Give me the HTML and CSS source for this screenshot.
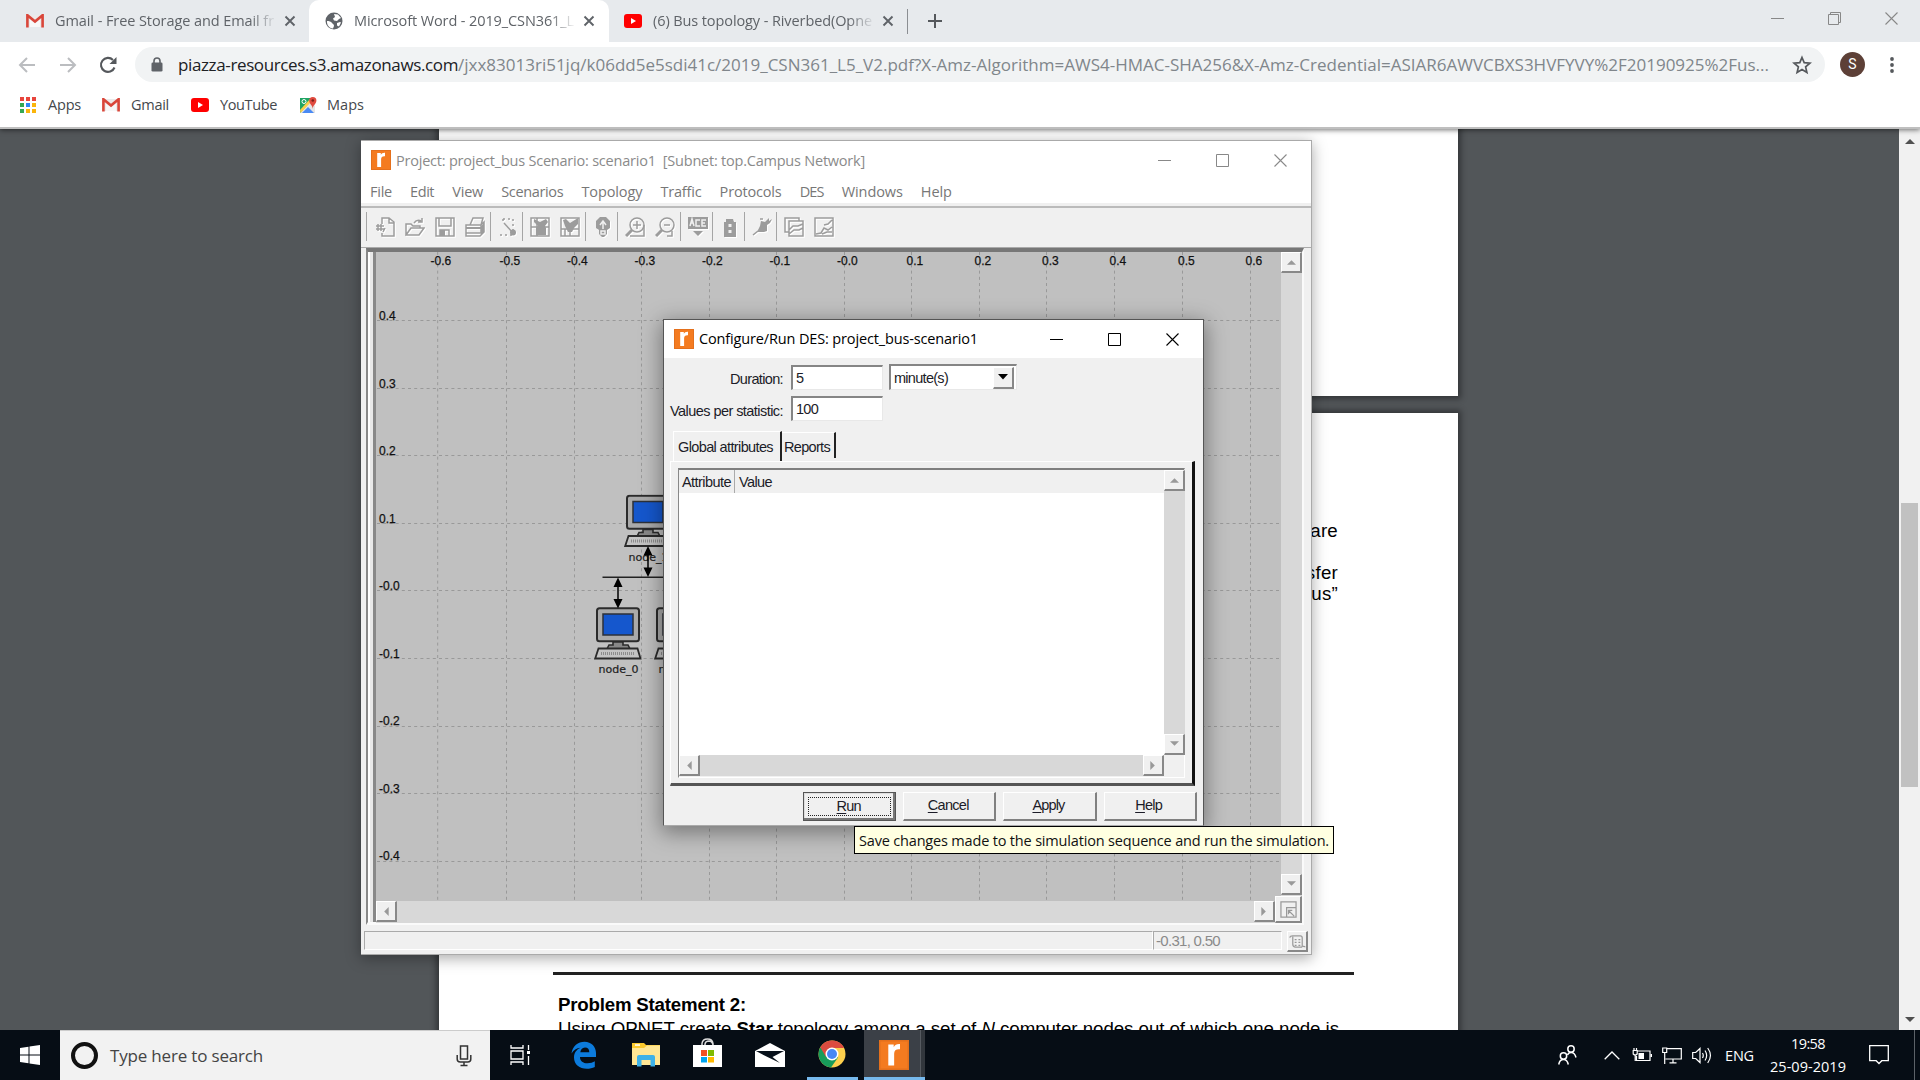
FILE: index.html
```html
<!DOCTYPE html>
<html lang="en">
<head>
<meta charset="utf-8">
<title>Microsoft Word - 2019_CSN361_L5_V2</title>
<link rel="stylesheet" href="styles.css">
</head>
<body>
<svg width="0" height="0" class="defs">
  <defs>
    <symbol id="gmail" viewBox="0 0 18 14"><path d="M1 1h16v12H1z" fill="#eceaea"/><path d="M4 13V5l5 4 5-4v8z" fill="#f8f8f8"/><path d="M1.400 13.500V1.200L9 7.600l7.600-6.400v12.300" fill="none" stroke="#d9463a" stroke-width="2.600"/></symbol>
    <symbol id="yt" viewBox="0 0 18 14"><rect width="18" height="14" rx="3" fill="#f00"/><path d="M7 4l5 3-5 3z" fill="#fff"/></symbol>
    <symbol id="x" viewBox="0 0 12 12"><path d="M1.500 1.500l9 9m0-9l-9 9" fill="none" stroke="currentColor" stroke-width="1.900"/></symbol>
    <symbol id="thinx" viewBox="0 0 13 13"><path d="M.5.5l12 12m0-12l-12 12" fill="none" stroke="currentColor" stroke-width="1.100"/></symbol>
    <symbol id="rlogo" viewBox="0 0 20 20"><path d="M0 0h20v20H0z" fill="#f47b20"/><path d="M.5.5h19v19H.5z" fill="none" stroke="#d9691a" stroke-opacity=".6"/><path d="M6.200 3h3.600v1.800C10.600 3.300 12 2.500 14 2.700v3.500c-2.600-.2-3.900.7-3.900 3V17H6.200z" fill="#fff"/></symbol>
    <symbol id="pc" viewBox="0 0 48 53">
      <rect x="3" y="1.200" width="42" height="33" rx="2.500" fill="#aaa" stroke="#2b2b2b" stroke-width="2"/>
      <rect x="9" y="7" width="30" height="21" fill="#1557cd" stroke="#2d3138" stroke-width="1.500"/>
      <path d="M19 35h10v3h5l2 4H13l2-4h4z" fill="#888" stroke="#2b2b2b" stroke-width="1.600"/>
      <path d="M4.500 41.500h39l3 10H1.200z" fill="#c4c4c4" stroke="#2b2b2b" stroke-width="1.800"/>
      <path d="M7 46.500h34" stroke="#8c8c8c" stroke-width="3" stroke-dasharray="1 1"/>
    </symbol>
    <symbol id="arrows" viewBox="0 0 10 32"><path d="M5 5v22" stroke="#000" stroke-width="1.500"/><path d="M5 .5L9.500 10H.5zM5 31.500L9.500 22H.5z"/></symbol>
  </defs>
</svg>

<div class="screen">
  <header class="browser">
    <div class="tabstrip">
      <div class="tab t1"><svg class="fav"><use href="#gmail"/></svg><span class="label fade"><span data-w="219">Gmail - Free Storage and Email fr</span></span><svg class="close"><use href="#x"/></svg></div>
      <div class="tab active"><svg class="fav globe" viewBox="0 0 18 18"><circle cx="9" cy="9" r="8.500" fill="#5f6368"/><path d="M2 9c2 0 4 .5 5 2s2 1 2 3l-1 2.500C4 16 1.700 13 2 9zM9 2l4 .6 3 3.500-2 .9-2 2-3-.5-1-2 2-1.500zM12 11l3-1 1 .5-2 4-2-1z" fill="#fff"/></svg><span class="label fade"><span data-w="220">Microsoft Word - 2019_CSN361_L</span></span><svg class="close"><use href="#x"/></svg></div>
      <div class="tab t3"><svg class="fav"><use href="#yt"/></svg><span class="label fade"><span data-w="219">(6) Bus topology - Riverbed(Opne</span></span><svg class="close"><use href="#x"/></svg></div>
      <svg class="plus" viewBox="0 0 16 16"><path d="M8 1v14M1 8h14" stroke="#55585c" stroke-width="2"/></svg>
      <div class="wincontrols">
        <svg viewBox="0 0 13 13"><path d="M0 6.500h13" stroke="#888"/></svg>
        <svg viewBox="0 0 13 13"><path d="M.5 2.500h10v10H.5zM2.500 2.500v-2h10v10h-2" fill="none" stroke="#888"/></svg>
        <svg><use href="#thinx"/></svg>
      </div>
    </div>
    <div class="toolbar">
      <svg class="nav" viewBox="0 0 18 18"><path d="M17 9H2m7-7L2 9l7 7" fill="none" stroke="#bbbdc0" stroke-width="2"/></svg>
      <svg class="nav" viewBox="0 0 18 18"><path d="M1 9h15M9 2l7 7-7 7" fill="none" stroke="#bbbdc0" stroke-width="2"/></svg>
      <svg class="nav" viewBox="0 0 18 18"><path d="M15.500 11.500A7 7 0 1 1 14 4" fill="none" stroke="#55585c" stroke-width="2.100"/><path d="M17.500 1v7h-7z" fill="#55585c"/></svg>
      <div class="omnibox">
        <svg class="lock" viewBox="0 0 12 15"><path d="M3 6V4a3 3 0 0 1 6 0v2" fill="none" stroke="#5f6368" stroke-width="1.600"/><rect x=".5" y="5.500" width="11" height="9" rx="1.300" fill="#5f6368"/></svg>
        <span class="url"><span class="host" data-w="280">piazza-resources.s3.amazonaws.com</span><span data-w="1311">/jxx83013ri51jq/k06dd5e5sdi41c/2019_CSN361_L5_V2.pdf?X-Amz-Algorithm=AWS4-HMAC-SHA256&amp;X-Amz-Credential=ASIAR6AWVCBXS3HVFYVY%2F20190925%2Fus...</span></span>
        <svg class="star" viewBox="0 0 20 20"><path d="M10 2.500l2.200 5.200 5.700.5-4.300 3.700 1.300 5.500-4.900-2.900-4.900 2.900 1.300-5.500L2.100 8.200l5.700-.5z" fill="none" stroke="#55585c" stroke-width="1.700"/></svg>
      </div>
      <span class="avatar">S</span>
      <svg class="dots" viewBox="0 0 4 18"><g fill="#55585c"><circle cx="2" cy="3" r="1.900"/><circle cx="2" cy="9" r="1.900"/><circle cx="2" cy="15" r="1.900"/></g></svg>
    </div>
    <nav class="bookmarks">
      <a class="b1"><svg viewBox="0 0 18 18"><path d="M1 1h4v4H1zM7 1h4v4H7zM13 1h4v4h-4z" fill="#e8453c"/><path d="M1 7h4v4H1z" fill="#34a853"/><path d="M7 7h4v4H7z" fill="#2f86f6"/><path d="M13 7h4v4h-4zM7 13h4v4H7zM13 13h4v4h-4z" fill="#fbb50b"/><path d="M1 13h4v4H1z" fill="#34a853"/></svg><span data-w="33">Apps</span></a>
      <a class="b2"><svg viewBox="0 0 18 14"><use href="#gmail"/></svg><span data-w="38">Gmail</span></a>
      <a class="b3"><svg viewBox="0 0 18 14"><use href="#yt"/></svg><span data-w="57">YouTube</span></a>
      <a class="b4"><svg viewBox="0 0 18 18"><path d="M1 2h14v15H1z" fill="#1fa463"/><path d="M1 17L12 5l4 5v7z" fill="#e5e5e5"/><path d="M3 17l6-6 6 6z" fill="#4a8af4"/><path d="M1 14L11 3l2 2L1.500 17z" fill="#fcd04b"/><circle cx="5" cy="5.500" r="2" fill="none" stroke="#fff"/><path d="M13.700 13c0-4-3.500-4.800-3.500-8.500a3.600 3.600 0 0 1 7.200 0c0 3.700-3.700 4.500-3.700 8.500z" fill="#e04b3f"/><circle cx="13.800" cy="4.500" r="1.300" fill="#7b1f19"/></svg><span data-w="37">Maps</span></a>
    </nav>
  </header>

  <main class="viewer">
    <div class="pages">
      <section class="page first"></section>
      <section class="page second">
        <div class="para"><p>are</p><p class="gap">sfer</p><p>bus”</p></div>
        <hr>
        <h2><span data-w="188">Problem Statement 2:</span></h2>
        <p class="body"><span data-w="781">Using OPNET create <b>Star</b> topology among a set of <i>N</i> computer nodes out of which one node is</span></p>
      </section>
    </div>
    <div class="vscroll"><svg viewBox="0 0 10 6"><path d="M0 6L5 1l5 5z"/></svg><span class="thumb"></span><svg class="end" viewBox="0 0 10 6"><path d="M0 0l5 5 5-5z"/></svg></div>
  </main>

  <footer class="taskbar">
    <div class="start"><svg viewBox="0 0 20 20"><path d="M0 3l8.500-1.200v7.700H0zM9.500 1.600L20 0v9.500H9.500zM0 10.500h8.500v7.700L0 17zM9.500 10.500H20V20L9.500 18.400z" fill="#fff"/></svg></div>
    <div class="search"><span class="ring"></span><span data-w="153">Type here to search</span>
      <svg class="mic" viewBox="0 0 16 22"><rect x="4.500" y="1" width="7" height="13" fill="none" stroke="#333" stroke-width="1.500"/><path d="M1.200 10v4q0 3 3 3h7.600q3 0 3-3v-4M8 17v3M4.500 20.500h7" fill="none" stroke="#333" stroke-width="1.500"/></svg></div>
    <div class="apps">
      <div class="app a1"><svg width="21" height="20" viewBox="0 0 21 20"><path d="M1 0v3h12V0M1 6h12v8H1zM1 20v-3h12v3M18.500 0v5M18.500 11v9" fill="none" stroke="#fff" stroke-width="1.300"/><path d="M17 6h3v3h-3z" fill="#fff"/></svg></div>
      <div class="app a2"><svg width="26" height="28" viewBox="0 0 26 28"><path d="M.5 12.500C1.500 5 7 .8 13.500.8 20.500.8 25 6 25 12v4H9c0 4 3 6.300 7.500 6.300 3 0 5.500-1 7.300-2V26c-2.300 1.200-5 1.800-8 1.800C8.500 27.800 3 23.500 3 16.500 3 12 5.500 8.500 9.500 6.800 5.500 7.300 2.500 9 .5 12.500zM9.300 11.200h9C18.300 8.500 17 6.500 14 6.500S9.700 8.700 9.300 11.200z" fill="#0c7bdc"/></svg></div>
      <div class="app a3"><svg width="28" height="24" viewBox="0 0 28 24"><path d="M0 0h12l2 2h14v20H0z" fill="#fbc92d"/><path d="M0 5h12l3-2.500h13V22H0z" fill="#ffe694"/><path d="M3 1.300h5v1.500H3z" fill="#fff"/><path d="M5 23.500V14q0-2 2-2h14q2 0 2 2v9.500h-4.500V17h-9v6.500z" fill="#3db1e8"/></svg></div>
      <div class="app a4"><svg width="29" height="29" viewBox="0 0 29 29"><path d="M9 8V5.500Q9.500 1 14.500 1t5.500 4.500V8M12 8V6q.5-3 4-3 3.500.5 4 4" fill="none" stroke="#ddd" stroke-width="1.500"/><path d="M0 7h29v22H0z" fill="#fff"/><path d="M8 12h6v6H8z" fill="#f25022"/><path d="M15 12h6v6h-6z" fill="#7fba00"/><path d="M8 19h6v5.500H8z" fill="#00a4ef"/><path d="M15 19h6v5.500h-6z" fill="#ffb900"/></svg></div>
      <div class="app a5"><svg width="30" height="24" viewBox="0 0 30 24"><path d="M0 8l15-8 15 8v16H0z" fill="#fff"/><path d="M1 8h28L17.500 14 25 20 12.500 14z" fill="#07101a"/></svg></div>
      <div class="app a6 open"><svg width="28" height="28" viewBox="0 0 28 28"><circle cx="14" cy="14" r="13.500" fill="#fdd04d"/><path d="M14 14L2.300 7.300A13.500 13.500 0 0 0 13 27.500l7-10z" fill="#179c5a"/><path d="M14 8h12.100A13.500 13.500 0 0 0 2.300 7.300L8 17z" fill="#dc4b3f"/><circle cx="14" cy="14" r="6.500" fill="#fff"/><circle cx="14" cy="14" r="5" fill="#4687f4"/></svg></div>
      <div class="app a7 open current"><svg width="30" height="30"><use href="#rlogo"/></svg></div>
    </div>
    <div class="tray">
      <svg class="people" viewBox="0 0 19 20"><g fill="none" stroke="#fff" stroke-width="1.500"><circle cx="13" cy="4" r="3.200"/><circle cx="5.500" cy="11" r="3.200"/><path d="M.7 19.500q1-5 4.800-5t4.800 5M9.500 10q1-2.500 3.500-2.500 3.800 0 5 5"/></g></svg>
      <svg class="chev" viewBox="0 0 16 9"><path d="M.7 8.300L8 1l7.300 7.300" fill="none" stroke="#fff" stroke-width="1.300"/></svg>
      <svg class="bat" viewBox="0 0 20 14"><g fill="none" stroke="#fff" stroke-width="1.200"><path d="M5.500 3H18v9.500H4.500V8M1.200 2.500h4V6q-2 2-4 0zM2 0v2.500M4.500 0v2.500M3.200 7v6"/></g><path d="M6.500 5H12v6H6.500zM18.500 6H20v3h-1.500z" fill="#fff"/></svg>
      <svg class="net" viewBox="0 0 20 17"><path d="M5 1.600h14.300V12H3.500M11 12v3.500M7.500 15.800h7M.7 1h4v4.500h-4zM2.700 5.500V17" fill="none" stroke="#fff" stroke-width="1.200"/></svg>
      <svg class="vol" viewBox="0 0 20 17"><path d="M.7 5.500h3L8 1.500v14l-4.300-4h-3zM10.500 6q1.500 2.500 0 5M13 3.500q3.300 5 0 10M15.700 1q5.500 7.500 0 15" fill="none" stroke="#fff" stroke-width="1.200"/></svg>
      <span class="lang"><span data-w="29">ENG</span></span>
      <div class="clock"><span data-w="34">19:58</span><span data-w="76">25-09-2019</span></div>
      <svg class="note" viewBox="0 0 20 20"><path d="M.7.700h18.600v15h-6.500L10 18.500l-2.800-2.800H.7z" fill="none" stroke="#fff" stroke-width="1.300"/></svg>
      <span class="peek"></span>
    </div>
  </footer>

  <section class="window project">
    <div class="titlebar"><svg class="logo"><use href="#rlogo"/></svg><span class="title"><span data-w="469">Project: project_bus Scenario: scenario1&nbsp; [Subnet: top.Campus Network]</span></span>
      <div class="ctl"><svg viewBox="0 0 13 13"><path d="M0 6.500h13" stroke="#888"/></svg><svg viewBox="0 0 13 13"><path d="M.5.500h12v12H.5z" fill="none" stroke="#888"/></svg><svg><use href="#thinx"/></svg></div>
    </div>
    <div class="menubar"><span data-w="22">File</span><span data-w="24">Edit</span><span data-w="31">View</span><span data-w="62">Scenarios</span><span data-w="61">Topology</span><span data-w="41">Traffic</span><span data-w="62">Protocols</span><span data-w="24">DES</span><span data-w="61">Windows</span><span data-w="31">Help</span></div>
    <div class="tools">
      <div class="group g4">
        <svg viewBox="0 0 20 20"><path d="M7 7V1h7l5 4v14H7v-3M14 1v5h5M1 9h8M1 12h8M3 7v7M6 7v7M8 15l2-4" /></svg>
        <svg viewBox="0 0 20 20"><path d="M1 18V7h5l2 2h7v2M1 18l5-7h13l-5 7zM9 6q3-4 7-2M17 1v4h-4"/></svg>
        <svg viewBox="0 0 20 20"><path d="M1 1h18v18H1zM4 1v8h12V1M5 19v-6h9v6"/><path class="f" d="M5 13h5v6H5z"/></svg>
        <svg viewBox="0 0 20 20"><path d="M5 8l3-7h10l-2 7M1 8h15v8H1zM1 16v3h14l4-4V5l-3 3"/><path class="f" d="M1 10h15v2H1zM16 9l3-3v9l-3 3z"/></svg>
      </div>
      <div class="group"><svg viewBox="0 0 20 20"><path d="M5 2h10v13M5 2v3M2 18h12" stroke-dasharray="2 3"/><path d="M6 6l9 10"/><circle class="f" cx="15" cy="15.500" r="3"/></svg></div>
      <div class="group two">
        <svg viewBox="0 0 20 20"><path d="M1 1h18v18H1zM1 10h18M7 1v18"/><path class="f" d="M4 2l6 3 6-3 2 3-3 4 1 2v7H6v-7l2-2-4-4z"/></svg>
        <svg viewBox="0 0 20 20"><path d="M1 1h18v18H1zM1 12h18M10 12v7M5 12v7"/><path class="f" d="M3 3l3-1 4 4 8-5v6l-4 4-2 4H8l-3-6z"/></svg>
      </div>
      <div class="group"><svg viewBox="0 0 20 20"><path class="f" d="M7 0h6l4 4v7l-3 2v4l-3 3H9l-3-3v-4l-3-2V4z"/><path d="M10 4v8M7 8l3-4 3 4M8 14h4v3H8z" class="w"/></svg></div>
      <div class="group two">
        <svg viewBox="0 0 20 20"><circle cx="12" cy="8" r="7"/><path d="M12 4v8M8 8h8M19 8v11H5"/><path d="M7 13l-6 6" stroke-width="3"/></svg>
        <svg viewBox="0 0 20 20"><circle cx="12" cy="8" r="7"/><path d="M9 8h6M17 14v5h-5"/><path d="M7 13l-6 6" stroke-width="3"/></svg>
      </div>
      <div class="group"><svg viewBox="0 0 20 20"><path class="f" d="M0 0h20v12H0zM5 14h10l-5 5z"/><path class="w" d="M2 9l2-7 2 7M3 6h2M12 3H8v6h4M18 3h-4v6h4M14 6h3"/></svg></div>
      <div class="group"><svg viewBox="0 0 20 20"><path class="f" d="M4 5h2V2h7l1 3h2v15H4z"/><path class="w" d="M10 7v3M10 13v3" stroke-width="3"/></svg></div>
      <div class="group"><svg viewBox="0 0 20 20"><path class="f" d="M9 4l4 1 4-4v3l3-2-2 4-3 2v6l-3 1H5l3-6z"/><path d="M1 18l5-4M8 2h3"/></svg></div>
      <div class="group two">
        <svg viewBox="0 0 20 20"><path d="M5 15H1V1h14v3M5 4h14v15H5zM5 13l4-4h5l5-2M5 17l5-4h5l4-2"/></svg>
        <svg viewBox="0 0 20 20"><path d="M1 1h18v18H1zM2 17l5-1 3-5 4 2 4-3M10 8l4-1 4-4M8 17l5-2h5"/></svg>
      </div>
    </div>
    <div class="workspace">
      <svg class="canvas" viewBox="376 252 905 649">
        <path class="grid" d="M437.700 252v649M506.500 252v649M574.500 252v649M641.500 252v649M709.500 252v649M776.500 252v649M844.500 252v649M911.500 252v649M979.500 252v649M1046.500 252v649M1114.500 252v649M1182.500 252v649M1250.500 252v649M377 320.500h904M377 388.500h904M377 455.500h904M377 523.500h904M377 590.500h904M377 658.500h904M377 726.500h904M377 793.500h904M377 861.500h904"/>
        <g class="axis">
          <text x="430.500" y="265">-0.6</text><text x="499.500" y="265">-0.5</text><text x="567" y="265">-0.4</text><text x="634.500" y="265">-0.3</text><text x="702" y="265">-0.2</text><text x="769.500" y="265">-0.1</text><text x="837" y="265">-0.0</text><text x="906.500" y="265">0.1</text><text x="974.500" y="265">0.2</text><text x="1042" y="265">0.3</text><text x="1109.500" y="265">0.4</text><text x="1178" y="265">0.5</text><text x="1245.500" y="265">0.6</text>
          <text x="379" y="320">0.4</text><text x="379" y="388">0.3</text><text x="379" y="455">0.2</text><text x="379" y="523">0.1</text><text x="379" y="590">-0.0</text><text x="379" y="658">-0.1</text><text x="379" y="725">-0.2</text><text x="379" y="793">-0.3</text><text x="379" y="860">-0.4</text>
        </g>
        <use href="#pc" x="594" y="607" width="48" height="53"/>
        <use href="#pc" x="624" y="494.500" width="48" height="53"/>
        <use href="#pc" x="654" y="607" width="48" height="53"/>
        <path d="M602.500 577.300h70" stroke="#222" stroke-width="1.500"/>
        <g class="names"><text x="598.500" y="673">node_0</text><text x="628.500" y="560.500">node_1</text><text x="658.500" y="673">node_2</text></g>
        <use href="#arrows" x="613" y="577" width="10" height="32"/>
        <use href="#arrows" x="643" y="545.500" width="10" height="32"/>
      </svg>
      <div class="sb v"><span class="btn"><svg viewBox="0 0 10 6"><path d="M0 6l5-5 5 5z"/></svg></span><span class="btn"><svg viewBox="0 0 10 6"><path d="M0 0l5 5 5-5z"/></svg></span></div>
      <div class="sb h"><span class="btn"><svg viewBox="0 0 6 10"><path d="M6 0L1 5l5 5z"/></svg></span><span class="btn"><svg viewBox="0 0 6 10"><path d="M0 0l5 5-5 5z"/></svg></span></div>
      <span class="btn corner"><svg viewBox="0 0 18 18"><path d="M1 1h16v16H1zM7 7h10v10H7zM9 10l6 6M9 14v-4h4"/></svg></span>
    </div>
    <div class="status"><span class="msg"></span><span class="pos"><span data-w="64">-0.31, 0.50</span></span><span class="btn"><svg viewBox="0 0 18 18"><path d="M4 3h8q2 0 2 2v9q3 0 3 1M4 3Q1 3 1 5M4 4v8q0 3 3 3h7M6 7h2M10 7h2M6 10h2M10 10h2M6 13h2M10 13h2"/></svg></span></div>
  </section>

  <section class="window dialog">
    <div class="titlebar"><svg class="logo"><use href="#rlogo"/></svg><span class="title"><span data-w="279">Configure/Run DES: project_bus-scenario1</span></span>
      <div class="ctl"><svg viewBox="0 0 13 13"><path d="M0 6.500h13" stroke="#000"/></svg><svg viewBox="0 0 13 13"><path d="M.5.500h12v12H.5z" fill="none" stroke="#000"/></svg><svg><use href="#thinx"/></svg></div>
    </div>
    <div class="form">
      <label><span data-w="53">Duration:</span></label><span class="field">5</span><span class="field select"><span data-w="54">minute(s)</span><span class="btn"><svg viewBox="0 0 10 6"><path d="M0 0l5 5.500 5-5.500z" fill="#000"/></svg></span></span>
      <label><span data-w="113">Values per statistic:</span></label><span class="field low"><span data-w="22">100</span></span>
    </div>
    <div class="tabs"><span class="dtab on"><span data-w="95">Global attributes</span></span><span class="dtab"><span data-w="46">Reports</span></span></div>
    <div class="panel">
      <div class="table">
        <div class="thead"><span class="c1"><span data-w="49">Attribute</span></span><span class="c2"><span data-w="33">Value</span></span></div>
        <div class="sb v"><span class="btn"><svg viewBox="0 0 10 6"><path d="M0 6l5-5 5 5z"/></svg></span><span class="btn"><svg viewBox="0 0 10 6"><path d="M0 0l5 5 5-5z"/></svg></span></div>
        <div class="sb h"><span class="btn"><svg viewBox="0 0 6 10"><path d="M6 0L1 5l5 5z"/></svg></span><span class="btn"><svg viewBox="0 0 6 10"><path d="M0 0l5 5-5 5z"/></svg></span></div>
      </div>
    </div>
    <div class="actions"><button class="run"><span data-w="24"><u>R</u>un</span></button><button><span data-w="41"><u>C</u>ancel</span></button><button><span data-w="32"><u>A</u>pply</span></button><button><span data-w="27"><u>H</u>elp</span></button></div>
  </section>
  <div class="tooltip"><span data-w="470">Save changes made to the simulation sequence and run the simulation.</span></div>
</div>
<script src="fit.js"></script>
</body>
</html>
```
FILE: styles.css
```css
* { box-sizing: border-box; }
body { margin: 0; overflow: hidden; font-family: "Open Sans", "Noto Sans", sans-serif; }
svg { display: block; flex: none; }
.defs { position: absolute; }
[data-w] { display: inline-block; white-space: pre; flex: none; }
.screen { position: relative; width: 1920px; height: 1080px; overflow: hidden; display: flex; flex-direction: column; }

/* browser chrome */
.browser { height: 129px; background: #fff; border-bottom: 2px solid #bfbfbf; flex: none; box-shadow: 0 1px 5px rgba(0,0,0,.55); z-index: 1; }
.tabstrip { height: 42px; background: #e7eaed; display: flex; align-items: center; color: #5f6368; font-size: 14.5px; }
.tab { height: 42px; display: flex; align-items: center; flex: none; }
.t1 { width: 309px; padding-left: 26px; border-radius: 0 0 8px 0; }
.active { width: 300px; padding-left: 16px; background: #fff; border-radius: 10px 10px 0 0; }
.t3 { width: 299px; padding-left: 15px; position: relative; }
.t3::after { content: ""; position: absolute; right: 0; top: 9px; width: 1px; height: 25px; background: #8b8e92; }
.fav { width: 18px; height: 14px; }
.globe { height: 18px; }
.label { width: 222px; margin-left: 11px; overflow: hidden; line-height: 24px; flex: none; }
.fade { -webkit-mask-image: linear-gradient(90deg, #000 88%, transparent 100%); mask-image: linear-gradient(90deg, #000 88%, transparent 100%); }
.close { width: 12px; height: 12px; margin-left: 7px; }
.plus { width: 16px; height: 16px; margin-left: 19px; }
.wincontrols { display: flex; gap: 44px; margin-left: auto; margin-right: 22px; color: #888; padding-bottom: 6px; }
.wincontrols svg { width: 13px; height: 13px; }
.toolbar { height: 45px; display: flex; align-items: center; padding-left: 18px; }
.nav { width: 18px; height: 18px; margin-right: 23px; }
.nav + .nav + .nav { margin-right: 18px; margin-left: -1px; }
.omnibox { width: 1690px; height: 35px; background: #f1f3f4; border-radius: 18px; display: flex; align-items: center; padding-left: 16px; flex: none; }
.lock { width: 12px; height: 15px; }
.url { margin-left: 15px; color: #80868b; font-size: 17px; white-space: nowrap; width: 1614px; flex: none; }
.host { color: #202124; }
.star { width: 20px; height: 20px; }
.avatar { width: 25px; height: 25px; border-radius: 50%; background: #5d4037; color: #fff; font: 14px/25px Roboto, sans-serif; text-align: center; margin-left: 15px; }
.dots { width: 4px; height: 18px; margin-left: 25px; }
.bookmarks { display: flex; height: 35px; align-items: center; font-size: 14.5px; color: #45484c; }
.bookmarks a { display: flex; align-items: center; gap: 11px; flex: none; }
.bookmarks svg { width: 18px; height: 18px; }
.bookmarks span { margin-top: -1px; }
.b1 { width: 83px; margin-left: 19px; }
.b2 { width: 89px; }
.b3 { width: 108px; }
.bookmarks .b4 { gap: 10px; }

/* pdf viewer */
.viewer { flex: 1; background: #525659; display: flex; min-height: 0; }
.pages { width: 1899px; padding-left: 439px; overflow: hidden; }
.page { width: 1019px; background: #fff; box-shadow: 0 0 6px 3px rgba(0,0,0,.38); color: #000; font: 18.7px/21px "Liberation Sans", Arial, sans-serif; }
.page p, .page h2 { margin: 0; }
.first { height: 267px; margin-bottom: 17px; }
.second { height: 900px; padding: 107px 120px 0 114px; }
.para { height: 452px; text-align: right; letter-spacing: .25px; }
.para .gap { margin-top: 21px; }
.page hr { border: 0; height: 3px; background: #222; margin: 0 -16px 19px 0; width: 801px; }
.page h2 { font-size: 18.7px; line-height: 22px; padding-left: 5px; }
.page .body { padding-left: 5px; line-height: 26px; white-space: nowrap; }
.vscroll { width: 21px; background: #f1f1f1; display: flex; flex-direction: column; align-items: center; padding: 9px 0 7px; }
.vscroll svg { width: 10px; height: 6px; fill: #505050; }
.vscroll .thumb { width: 17px; height: 284px; background: #c1c1c1; margin-top: 359px; }
.vscroll .end { margin-top: auto; }

/* taskbar */
.taskbar { height: 50px; flex: none; background: #060d15; display: flex; color: #fff; z-index: 1; }
.start { width: 60px; padding: 15px 20px; }
.start svg { width: 20px; height: 20px; }
.search { width: 430px; background: #f2f2f2; border-top: 1px solid #ccc; display: flex; align-items: center; color: #444; font-size: 17px; padding-left: 11px; }
.ring { width: 27px; height: 27px; border: 4px solid #111; border-radius: 50%; margin-right: 12px; }
.mic { width: 16px; height: 22px; margin-left: 193px; }
.apps { display: flex; width: 470px; }
.app { display: flex; align-items: center; justify-content: center; height: 50px; }
.a1 { width: 60px; } .a2 { width: 67px; } .a3 { width: 57px; } .a4 { width: 67px; padding-bottom: 5px; } .a5 { width: 58px; } .a6 { width: 51px; margin: 0 6px 0 8px; } .a7 { width: 61px; }
.a2, .a3, .a6 { padding-bottom: 1px; }
.a6 { padding-right: 2px; }
.a7 { padding-right: 2px; }
.open { border-bottom: 3px solid #76b9ed; }
.a6.open svg, .a7.open svg { margin-top: 2px; }
.current { background: linear-gradient(90deg, #3b4047 0 56px, #555a60 56px 57px, #31363c 57px); }
.tray { flex: 1; display: flex; align-items: center; }
.people { width: 19px; height: 20px; margin-left: 598px; }
.chev { width: 16px; height: 9px; margin-left: 27px; }
.bat { width: 20px; height: 14px; margin-left: 12px; }
.net { width: 20px; height: 17px; margin-left: 10px; }
.vol { width: 20px; height: 17px; margin-left: 10px; }
.lang { margin-left: 13px; font-size: 14.500px; }
.clock { margin-left: 15px; width: 78px; display: flex; flex-direction: column; align-items: center; font-size: 14.500px; line-height: 23px; }
.note { width: 20px; height: 20px; margin-left: 22px; }
.peek { margin-left: 25px; width: 1px; height: 50px; background: #5c6268; }

/* desktop windows */
.window { position: absolute; background: #f0f0f0; display: flex; flex-direction: column; z-index: 2; }
.titlebar { display: flex; align-items: center; background: #fff; flex: none; }
.logo { width: 20px; height: 20px; }
.title { font-size: 14.500px; margin-left: 5px; }
.ctl { display: flex; gap: 45px; margin-left: auto; }
.ctl svg { width: 13px; height: 13px; }
.btn { display: flex; align-items: center; justify-content: center; flex: none; width: 21px; height: 21px; background: #f0f0f0; border: 1px solid #fff; border-right: 2px solid #888; border-bottom: 2px solid #888; }
.btn svg { width: 9px; height: 6px; fill: #999; }
.h .btn svg { width: 6px; height: 9px; }
.sb { background: #d8d8d8; display: flex; justify-content: space-between; }
.sb.v { flex-direction: column; }

.project { left: 361px; top: 140px; width: 951px; height: 815px; border: 1px solid #aaa; border-left: 0; box-shadow: 0 3px 14px rgba(0,0,0,.35); color: #8a8a8a; }
.project .titlebar { height: 38px; padding: 0 24px 0 10px; }
.menubar { height: 24px; background: #fff; display: flex; padding: 1px 0 0 9px; gap: 18.100px; font-size: 14.500px; line-height: 23px; color: #777; flex: none; }
.tools { height: 42px; margin-top: 3px; border-top: 2px solid #bbb; border-bottom: 1px solid #aaa; display: flex; padding: 4px 0 0 5px; flex: none; }
.group { height: 29px; width: 32px; border-left: 1px solid #a5a5a5; display: flex; align-items: center; padding-left: 7px; gap: 10px; flex: none; }
.group.two { width: 63px; }
.group.g4 { width: 124px; padding-left: 8px; }
.group svg { width: 20px; height: 20px; fill: none; stroke: #9c9c9c; stroke-width: 1.500; filter: drop-shadow(1px 1px 0 #fff); }
.group .f { fill: #9c9c9c; stroke: none; }
.group .w { stroke: #f0f0f0; }
.workspace { margin: 0 7px 0 5px; height: 677px; flex: none; border: 4px solid #858585; border-width: 4px 2px 3px 2px; border-color: #777 #fafafa #fafafa #888; padding-left: 8px; display: grid; grid-template-columns: 886px 19px 21px; grid-template-rows: 649px 22px; background: linear-gradient(90deg, #fff 0 2px, #e8e8e8 2px 5px, #888 5px 8px, #f0f0f0 8px); }
.canvas { grid-area: 1/1/2/3; width: 905px; height: 649px; background: #c0c0c0; }
.workspace .sb.v { grid-area: 1/3/2/4; padding-bottom: 6px; }
.workspace .sb.h { grid-area: 2/1/3/2; margin-right: -13px; }
.grid { fill: none; stroke: #999; stroke-dasharray: 3 3.200; }
.axis { font: 12px "Liberation Sans", Arial, sans-serif; fill: #111; stroke: #111; stroke-width: .25; }
.names { font: 11px "DejaVu Sans", sans-serif; fill: #222; stroke: #222; stroke-width: .2; }
.corner { grid-area: 2/2/3/4; width: 27px; height: 27px; margin: -5px 0 0 13px; }
.corner svg, .status .btn svg { width: 17px; height: 17px; fill: none; stroke: #999; stroke-width: 1.300; }
.status { display: flex; padding: 6px 3px 0; height: 26px; font: 15px/17px "Liberation Sans", Arial, sans-serif; }
.msg { width: 789px; height: 19px; border: 1px solid #aaa; border-right-color: #fff; border-bottom-color: #fff; }
.pos { width: 129px; height: 19px; border: 1px solid #aaa; border-right-color: #fff; border-bottom-color: #fff; padding-left: 2px; margin-right: 5px; }

.dialog { left: 663px; top: 319px; width: 541px; height: 507px; border: 1px solid #555; border-bottom-color: #aaa; box-shadow: 0 5px 20px 2px rgba(0,0,0,.38); color: #1c1c28; font: 14.500px/18px "Liberation Sans", Arial, sans-serif; }
.dialog .titlebar { height: 38px; padding: 0 24px 0 10px; color: #000; }
.dialog .title { font-family: "Open Sans", "Noto Sans", sans-serif; }
.form { display: grid; grid-template-columns: 121px 92px 128px; column-gap: 6px; grid-template-rows: 26px 25px; row-gap: 6px; padding-top: 6px; }
.form label { text-align: right; align-self: center; padding: 4px 2px 0 0; justify-self: end; }
.field { height: 25px; align-self: end; background: #fff; border: 2px solid #858585; border-right: 1px solid #e8e8e8; border-bottom: 1px solid #e8e8e8; padding: 2px 0 0 3px; }
.select { height: 26px; display: flex; justify-content: space-between; padding: 0 2px 0 3px; align-items: center; width: 128px; }
.select .btn { height: 22px; }
.select .btn svg { width: 10px; height: 6px; }
.tabs { display: flex; align-items: flex-end; padding: 10px 0 0 9px; height: 40px; }
.dtab { height: 26px; padding: 5px 2px 0; border-top: 1px solid #fff; border-right: 2px solid #222; margin-bottom: 3px; width: 54px; }
.dtab.on { width: 109px; height: 30px; margin-bottom: 0; padding: 6px 4px 0; border-left: 1px solid #fff; }
.panel { margin: 0 7px 0 6px; width: 525px; height: 325px; border: 1px solid #fff; border-right: 3px solid #111; border-bottom: 3px solid #555; padding: 6px 7px 5px 7px; flex: none; }
.table { height: 310px; border: 1px solid #888; border-top: 2px solid #808080; border-right-color: #fff; border-bottom-color: #fff; display: grid; grid-template-columns: 485px 21px; grid-template-rows: 24px 261px 21px; background: #f0f0f0; }
.table .sb.v { grid-area: 1/2/3/3; }
.table .sb.h { grid-area: 3/1/4/2; }
.thead { display: flex; grid-area: 1/1/2/2; border-bottom: 1px solid #fff; padding-top: 3px; }
.table::before { content: ""; grid-area: 2/1/3/2; background: #fff; }
.c1 { width: 56px; padding-left: 3px; border-right: 1px solid #aaa; margin-top: -3px; padding-top: 3px; }
.c2 { padding-left: 4px; }
.actions { display: flex; gap: 7px; padding: 6px 0 0 139px; }
.actions button { width: 93.200px; height: 29px; background: #f0f0f0; border: 1px solid #fff; border-right: 2px solid #808080; border-bottom: 2px solid #808080; font: inherit; color: inherit; padding: 0 2px 2px 0; }
.actions u { text-underline-offset: 2px; }
.actions .run { border: 1px solid #555; box-shadow: inset -2px -2px 0 #777, inset 1px 1px 0 #ddd; outline: 1px dotted #222; outline-offset: -6px; }
.tooltip { position: absolute; z-index: 3; left: 854px; top: 826px; width: 480px; height: 28px; background: #ffffe1; border: 1.500px solid #000; padding-left: 4px; font-size: 14.500px; line-height: 28px; color: #111; }
```
FILE: fit.js
```js
// Tracks each label so that it fills its nominal width in the substitute font.
document.querySelectorAll('[data-w]').forEach(function (el) {
  var extra = Number(el.dataset.w) - el.getBoundingClientRect().width;
  el.style.letterSpacing = extra / el.textContent.length + 'px';
});
```
